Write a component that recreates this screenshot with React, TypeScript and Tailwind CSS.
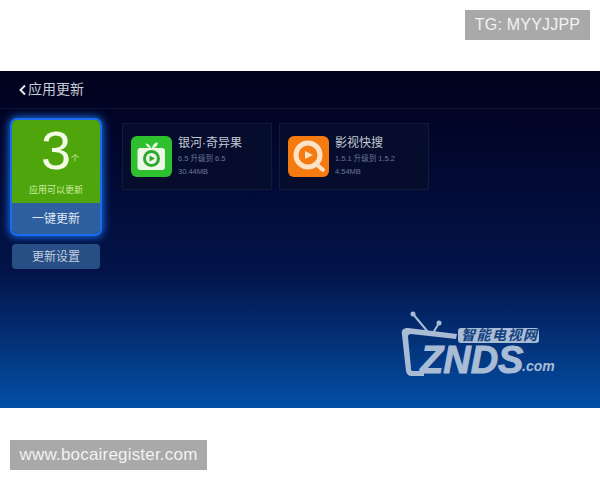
const cjk = "font-['Liberation_Sans','Noto_Sans_CJK_SC',sans-serif]";

function GreenIcon() {
  return (
    <svg width="41" height="41" viewBox="0 0 41 41" className="shrink-0">
      <rect width="41" height="41" rx="6" fill="#2fc02f" />
      <rect x="6.5" y="12" width="27.5" height="22" rx="3" fill="#eef8e6" />
      <path d="M20 12 C19 9 17 7.5 14.5 7.5 C15.5 10 17 12 20 12 Z" fill="#eef8e6" />
      <path d="M21 12 C22 8 24 6.5 27 6.5 C26.5 10 24.5 12 21 12 Z" fill="#eef8e6" />
      <circle cx="20.5" cy="22.5" r="8.5" fill="#2fa82f" />
      <circle cx="20.5" cy="22.5" r="5.5" fill="#eef8e6" />
      <path d="M18.5 19.5 L24 22.5 L18.5 25.5 Z" fill="#2fa82f" />
    </svg>
  );
}

function OrangeIcon() {
  return (
    <svg width="41" height="41" viewBox="0 0 41 41" className="shrink-0">
      <rect width="41" height="41" rx="6" fill="#f57a10" />
      <circle cx="20" cy="19" r="12" fill="none" stroke="#fbe3c8" strokeWidth="5" />
      <path d="M28 28 L35 34" stroke="#fbe3c8" strokeWidth="4" strokeLinecap="round" />
      <path d="M17 15 L25 19 L17 23 Z" fill="#fbe3c8" />
    </svg>
  );
}

function AppCard({ name, version, size, icon }: { name: string; version: string; size: string; icon: React.ReactNode }) {
  return (
    <div className="w-[150px] h-[67px] flex items-center gap-[6px] pl-[8px] border border-[#0f1c3c] bg-[#050c2c]">
      {icon}
      <div className={`flex flex-col ${cjk}`}>
        <span className="text-[12px] leading-[16px] text-[#c4c9d6]">{name}</span>
        <span className="text-[7.5px] leading-[13px] mt-[1px] text-[#6d7692]">{version}</span>
        <span className="text-[7.5px] leading-[13px] text-[#6d7692]">{size}</span>
      </div>
    </div>
  );
}

function Logo() {
  return (
    <div className="relative w-[156px] h-[76px] text-[#a9bcd6]">
      <svg width="70" height="70" viewBox="0 0 70 70" className="absolute left-0 top-0">
        <path d="M13 3 L28 21 M39 12 L33 22" stroke="#a9bcd6" strokeWidth="2" />
        <circle cx="13" cy="3" r="2.5" fill="#a9bcd6" />
        <circle cx="39" cy="12" r="2.5" fill="#a9bcd6" />
        <path d="M57 23 L8 17 C3 17 1 19 2 24 L6 60 C7 64 9 65 12 65 L24 65 L24 60 L13 60 C11 60 11 59 11 57 L8 26 C8 24 9 23 11 23 L56 28 Z" fill="#a9bcd6" />
      </svg>
      <div className={`absolute left-[58px] top-[17px] h-[15px] pl-[3px] bg-[#a9bcd6] rounded-[3px] text-[#12407f] text-[14px] leading-[15px] tracking-[1.5px] font-bold italic whitespace-nowrap ${cjk}`}>
        智能电视网
      </div>
      <div className="absolute left-[20px] top-[35px] font-['Liberation_Sans',sans-serif] font-bold italic text-[38px] leading-[28px] [-webkit-text-stroke:1px_#a9bcd6]">
        ZNDS
      </div>
      <div className="absolute left-[122px] top-[48px] font-['Liberation_Sans',sans-serif] font-bold italic text-[14px] leading-[14px]">
        .com
      </div>
    </div>
  );
}

export default function App() {
  return (
    <div className="w-[600px] h-[480px] bg-white flex flex-col relative overflow-hidden">
      <div className="h-[71px] pt-[10px] pr-[10px] flex justify-end">
        <div className="w-[125px] h-[30px] bg-[#a9a9a9] text-[#f2f2f2] text-[16px] tracking-[0.2px] font-['Liberation_Sans',sans-serif] flex items-center justify-center">
          TG: MYYJJPP
        </div>
      </div>

      <div className="h-[337px] flex flex-col bg-gradient-to-b from-[#01021c] via-[#03144a] via-60% to-[#0250a8]">
        <div className={`h-[38px] border-b border-[#0c1430] flex items-center pl-[18px] gap-[1px] text-[#c8ccd6] text-[14px] ${cjk}`}>
          <svg width="9" height="12" viewBox="0 0 9 12">
            <path d="M7 1.5 L2.5 6 L7 10.5" fill="none" stroke="#e4e6ec" strokeWidth="2" />
          </svg>
          应用更新
        </div>

        <div className="flex flex-1">
          <div className="w-[122px] pl-[12px] pt-[11px] flex flex-col">
            <div className="w-[88px] h-[114px] rounded-[5px] flex flex-col shadow-[0_0_0_2px_#1a6cf0,0_0_8px_3px_#1a70f0]">
              <div className={`h-[83px] rounded-t-[5px] bg-[#4ea60c] flex flex-col items-center ${cjk}`}>
                <div className="relative h-[60px]">
                  <span className="font-['Liberation_Sans',sans-serif] text-[54px] leading-[60px] text-[#f2fbe6]">3</span>
                  <span className="absolute left-[30px] top-[33px] text-[8px] text-[#d8f0b8]">个</span>
                </div>
                <span className="text-[9px] leading-[12px] mt-[4px] text-[#d0efa8]">应用可以更新</span>
              </div>
              <div className={`flex-1 rounded-b-[5px] bg-[#2f5f9e] flex items-center justify-center text-[12px] text-[#dfe6f2] ${cjk}`}>
                一键更新
              </div>
            </div>
            <div className={`w-[88px] h-[25px] mt-[10px] rounded-[4px] bg-[#274f86] flex items-center justify-center text-[12px] text-[#c4cede] ${cjk}`}>
              更新设置
            </div>
          </div>

          <div className="flex gap-[7px] pt-[14px]">
            <AppCard name="银河·奇异果" version="6.5 升级到 6.5" size="30.44MB" icon={<GreenIcon />} />
            <AppCard name="影视快搜" version="1.5.1 升级到 1.5.2" size="4.54MB" icon={<OrangeIcon />} />
          </div>
        </div>
      </div>

      <div className="flex-1 pt-[32px] pl-[10px]">
        <div className="w-[197px] h-[30px] bg-[#a9a9a9] text-[#f2f2f2] text-[17px] tracking-[0.2px] font-['Liberation_Sans',sans-serif] flex items-center justify-center">
          www.bocairegister.com
        </div>
      </div>

      <div className="absolute left-[400px] top-[311px]">
        <Logo />
      </div>
    </div>
  );
}
